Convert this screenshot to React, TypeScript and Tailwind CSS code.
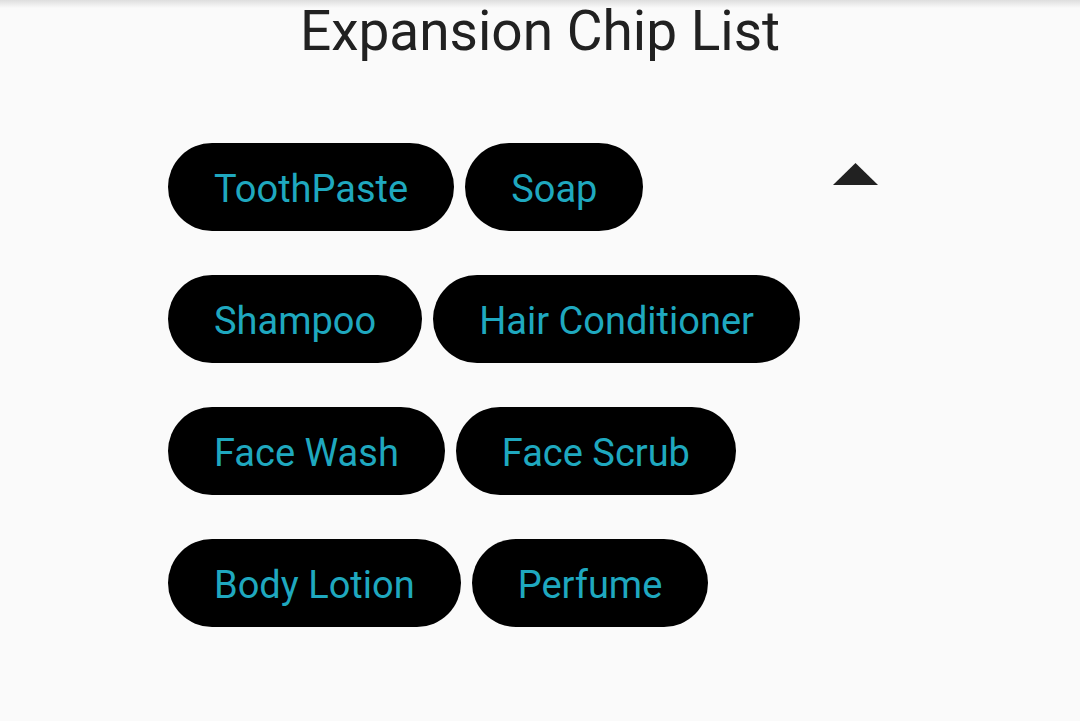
const chips = [
  ["ToothPaste", "Soap"],
  ["Shampoo", "Hair Conditioner"],
  ["Face Wash", "Face Scrub"],
  ["Body Lotion", "Perfume"],
];

export default function App() {
  return (
    <div
      className="relative h-[721px] w-[1080px] overflow-hidden bg-[#fafafa]"
      style={{ fontFamily: "Roboto, 'Noto Sans', sans-serif" }}
    >
      <div className="pointer-events-none absolute inset-x-0 top-0 h-[8px] bg-gradient-to-b from-[#dedede] to-[#fafafa]" />
      <h1 className="text-center text-[55px] leading-[62px] text-[#212121]">
        Expansion Chip List
      </h1>

      <div className="mt-[81px] flex pl-[168px]">
        <div className="flex flex-col gap-[44px]">
          {chips.map((row, i) => (
            <div key={i} className="flex gap-[11px]">
              {row.map((label) => (
                <div
                  key={label}
                  className="flex h-[88px] items-center rounded-full bg-black px-[46px] pt-[4px] text-[38px] text-[#1fa8bf]"
                >
                  {label}
                </div>
              ))}
            </div>
          ))}
        </div>
        <div className="ml-auto mr-[201px] mt-[20px]">
          <svg width="46" height="23" viewBox="0 0 46 23">
            <path d="M0 22 L22.5 0 L45 22 Z" fill="#212121" />
          </svg>
        </div>
      </div>
    </div>
  );
}
